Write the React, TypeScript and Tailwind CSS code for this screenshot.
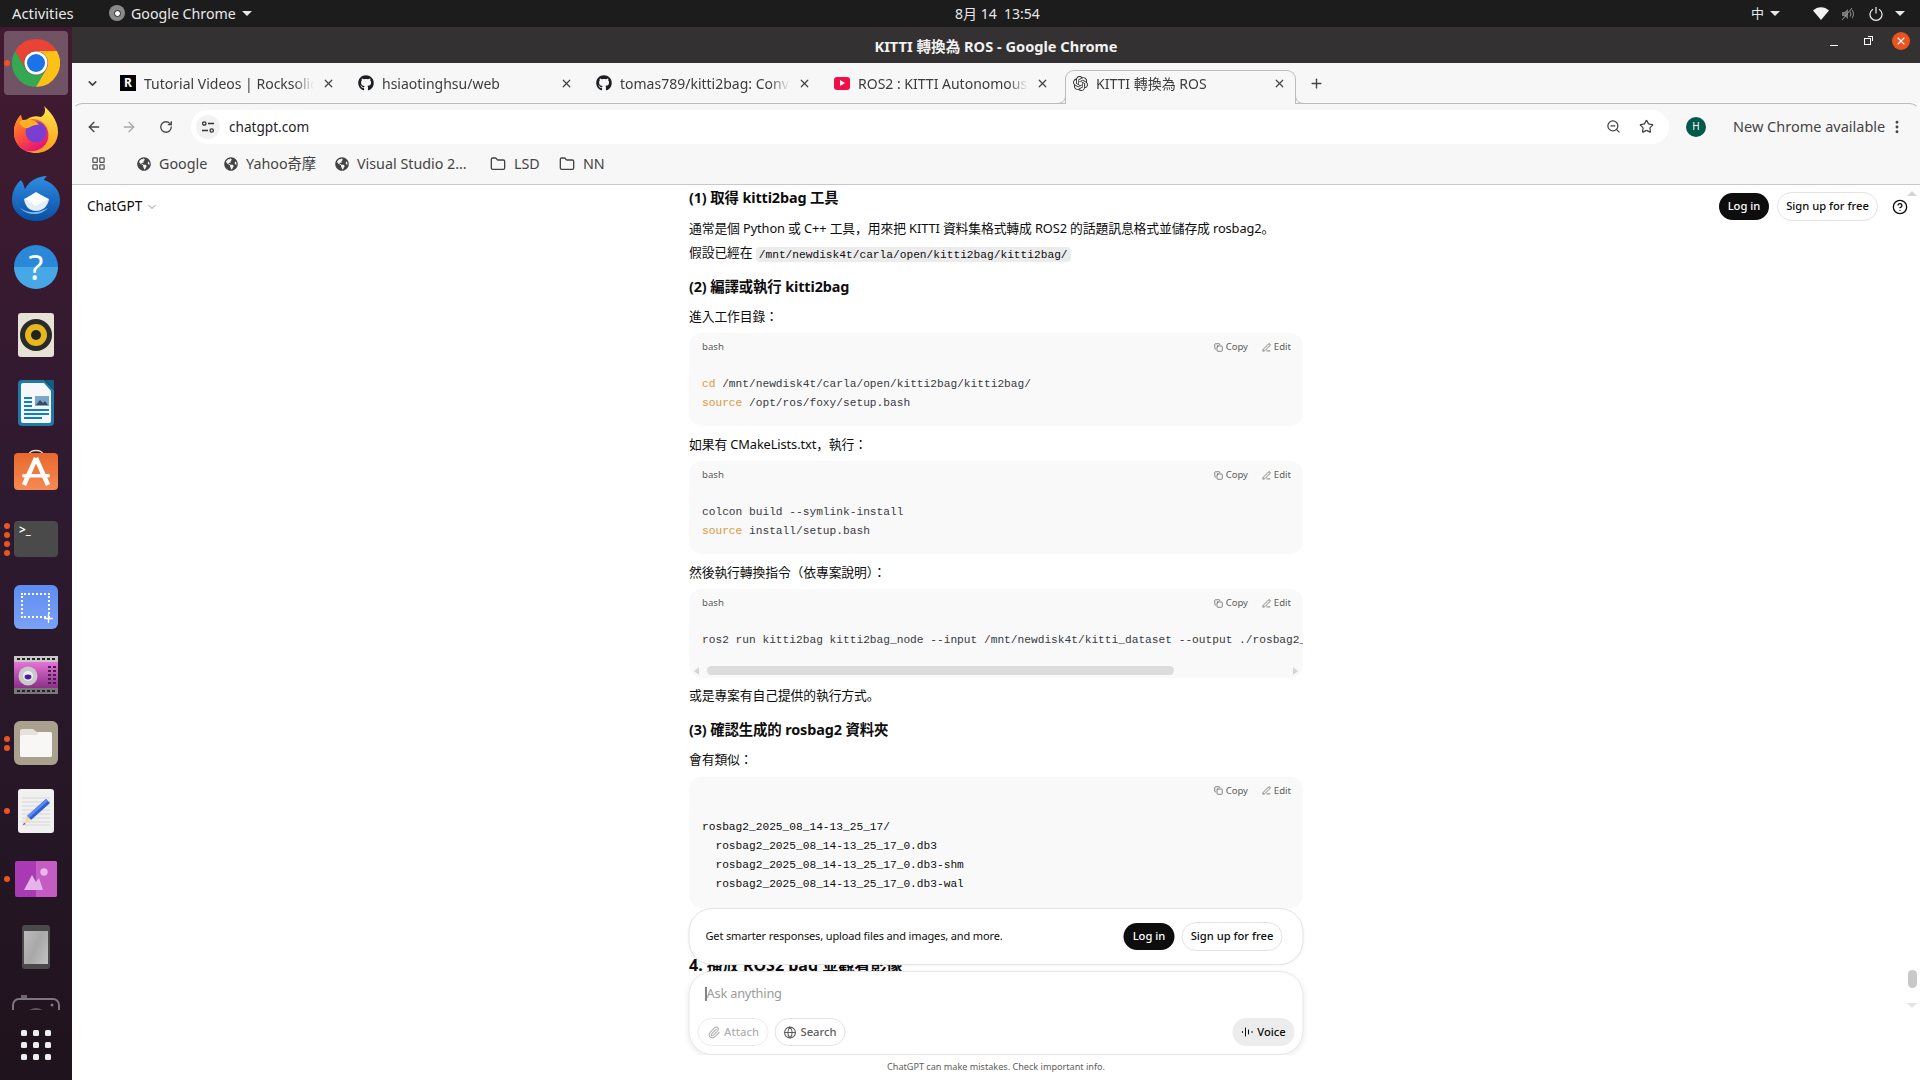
import { ArrowLeft, ArrowRight, ChevronDown, CircleHelp, Copy, EllipsisVertical, Folder, Globe, LayoutGrid, Paperclip, PenLine, Plus, RotateCw, Star, X, ZoomOut } from 'lucide-react'
import { FaGithub, FaGlobeAmericas } from 'react-icons/fa'
import { SiOpenai } from 'react-icons/si'
import type { ReactNode } from 'react'

const mono = "font-['Liberation_Mono','Noto_Sans_CJK_JP',monospace]"

function ChromeIcon({ size = 48 }: { size?: number }) {
  return (
    <svg width={size} height={size} viewBox="0 0 48 48">
      <path d="M24 0A24 24 0 0 1 44.8 12H24A12 12 0 0 0 13.6 30L3.2 12A24 24 0 0 1 24 0Z" fill="#ea4335" />
      <path d="M3.2 12A24 24 0 0 0 24 48L34.4 30A12 12 0 0 1 13.6 30Z" fill="#34a853" />
      <path d="M44.8 12H24A12 12 0 0 1 34.4 30L24 48A24 24 0 0 0 44.8 12Z" fill="#fbc116" />
      <circle cx="24" cy="24" r="11.5" fill="#fff" />
      <circle cx="24" cy="24" r="9" fill="#1a73e8" />
    </svg>
  )
}

function FirefoxIcon() {
  return (
    <svg className="-mt-[3px]" width="46" height="48" viewBox="0 0 46 48">
      <defs>
        <linearGradient id="ffBody" x1="0" y1="0" x2="0.6" y2="1">
          <stop offset="0" stopColor="#ff9a1f" />
          <stop offset="0.55" stopColor="#ff4f3a" />
          <stop offset="1" stopColor="#e5147a" />
        </linearGradient>
        <linearGradient id="ffTop" x1="0.5" y1="0" x2="0.5" y2="1">
          <stop offset="0" stopColor="#ffe84a" />
          <stop offset="1" stopColor="#ff9a1f" />
        </linearGradient>
      </defs>
      <path d="M31 0C36 5 45 13 45 26C45 38 35 47 23 47C10 47 1 38 1 26C1 19 4 13 8 9C8 13 10 15 12 16C15 11 21 9 28 11C32 9 33 4 31 0Z" fill="url(#ffTop)" />
      <path d="M1 26C1 19 4 13 8 9C8 13 10 15 12 16C16 12 24 12 29 16C37 22 38 34 30 41C23 47 10 47 5 39C2 35 1 31 1 26Z" fill="url(#ffBody)" />
      <circle cx="23" cy="26" r="10.5" fill="#7a3fd0" />
      <path d="M6 16C12 12 22 13 26 19C21 18 18 21 15 22C11 23 8 20 6 16Z" fill="#ffb11f" />
    </svg>
  )
}

function ThunderbirdIcon() {
  return (
    <svg width="48" height="48" viewBox="0 0 48 48">
      <defs>
        <linearGradient id="tbBody" x1="0" y1="0" x2="0" y2="1">
          <stop offset="0" stopColor="#2f8de4" />
          <stop offset="1" stopColor="#0a4fa3" />
        </linearGradient>
      </defs>
      <path d="M9 5C12 9 12 12 13 14C17 6 26 1 35 1C33 3 32 4 32 5C41 8 48 15 48 25C48 38 37 46 24 46C11 46 0 37 0 25C0 17 3 10 9 5Z" fill="url(#tbBody)" />
      <path d="M12 24L24 18L37 24C36 31 31 36 24 36C17 36 13 31 12 24Z" fill="#e4eefa" />
      <path d="M13 24L24 31L36 24L24 17Z" fill="#ffffff" />
      <path d="M4 26C7 37 22 41 36 33C28 42 10 42 4 26Z" fill="#7fc0f5" />
    </svg>
  )
}

function HelpIcon() {
  return (
    <div className="flex h-[44px] w-[44px] items-center justify-center rounded-full bg-[linear-gradient(#2a88d8_0%,#2a88d8_50%,#46a8e6_50%,#46a8e6_100%)] text-[34px] leading-none text-white">
      ?
    </div>
  )
}

function SpeakerIcon() {
  return (
    <div className="flex h-[44px] w-[36px] items-center justify-center rounded-[3px] bg-[#e6e2d6]">
      <div className="flex h-[32px] w-[32px] items-center justify-center rounded-full bg-[#2a2a2a]">
        <div className="flex h-[22px] w-[22px] items-center justify-center rounded-full bg-[#e6b81e]">
          <div className="h-[10px] w-[10px] rounded-full bg-[#222]" />
        </div>
      </div>
    </div>
  )
}

function WriterIcon() {
  return (
    <svg width="36" height="46" viewBox="0 0 36 46">
      <path d="M4 0H26L36 10V42A4 4 0 0 1 32 46H4A4 4 0 0 1 0 42V4A4 4 0 0 1 4 0Z" fill="#1f7aa8" />
      <path d="M5 3H26L33 11V41A2 2 0 0 1 31 43H5A2 2 0 0 1 3 41V5A2 2 0 0 1 5 3Z" fill="#f4f8fb" />
      <path d="M27 0L36 0V10Z" fill="#125c85" />
      <rect x="6" y="17" width="8" height="2" fill="#1080c0" />
      <rect x="6" y="21" width="8" height="2" fill="#1080c0" />
      <rect x="6" y="25" width="8" height="2" fill="#1080c0" />
      <rect x="17" y="16" width="14" height="10" fill="#7ba7c8" />
      <path d="M18 25L22 20L25 23L27 21L30 25Z" fill="#3a4a58" />
      <rect x="6" y="29" width="25" height="2" fill="#1080c0" />
      <rect x="6" y="33" width="25" height="2" fill="#1080c0" />
      <rect x="6" y="37" width="18" height="2" fill="#1080c0" />
    </svg>
  )
}

function SoftwareIcon() {
  return (
    <svg className="-mt-[4px]" width="44" height="44" viewBox="0 0 44 44">
      <defs>
        <linearGradient id="swBag" x1="0" y1="0" x2="0" y2="1">
          <stop offset="0" stopColor="#e9682d" />
          <stop offset="1" stopColor="#f58a52" />
        </linearGradient>
      </defs>
      <path d="M15 8C15 2 29 2 29 8" fill="none" stroke="#e8d9c8" strokeWidth="1.6" />
      <rect x="0" y="6" width="44" height="37" rx="4" fill="url(#swBag)" />
      <path d="M22 11L10 38M22 11L34 38" stroke="#fff" strokeWidth="4.5" fill="none" />
      <rect x="8" y="27" width="28" height="3.5" rx="1.7" fill="#fff" />
    </svg>
  )
}

function ScreenshotIcon() {
  return (
    <div className="relative h-[44px] w-[44px] rounded-[6px] bg-[linear-gradient(#5e8df0,#7aa2f7)]">
      <div className="absolute left-[7px] top-[8px] h-[25px] w-[29px] border-2 border-dotted border-white" />
      <Plus className="absolute bottom-[4px] right-[3px] text-white" size={13} strokeWidth={2.5} />
    </div>
  )
}

function KazamIcon() {
  return (
    <svg width="44" height="38" viewBox="0 0 44 38">
      <defs>
        <linearGradient id="kzFilm" x1="0" y1="0" x2="0" y2="1">
          <stop offset="0" stopColor="#e873d8" />
          <stop offset="1" stopColor="#8a2f88" />
        </linearGradient>
      </defs>
      <rect width="44" height="38" rx="1" fill="#a0a0a0" />
      <rect y="0" width="44" height="6" fill="#c8c8c8" />
      <rect y="32" width="44" height="6" fill="#777" />
      <rect y="6" width="44" height="26" fill="url(#kzFilm)" />
      {[3, 8, 13, 18, 23, 28, 33, 38].map((x) => (
        <g key={x}>
          <rect x={x} y="2" width="3" height="2" fill="#222" />
          <rect x={x} y="34" width="3" height="2" fill="#222" />
        </g>
      ))}
      <circle cx="14" cy="20" r="9.5" fill="#c9c9c9" />
      <circle cx="14" cy="20" r="5" fill="#eee" />
      <ellipse cx="14" cy="21" rx="3.4" ry="2.4" fill="#4b1e9e" />
      {[10, 14, 18, 22, 26].map((y) => (
        <g key={y}>
          <rect x="34" y={y} width="3" height="2" fill="#45204a" />
          <rect x="39" y={y} width="3" height="2" fill="#45204a" />
        </g>
      ))}
    </svg>
  )
}

function FilesIcon() {
  return (
    <div className="flex h-[44px] w-[44px] items-center justify-center rounded-[6px] bg-[#a9a18d]">
      <svg width="32" height="28" viewBox="0 0 32 28">
        <path d="M2 0H13L17 3H30A2 2 0 0 1 32 5V26A2 2 0 0 1 30 28H2A2 2 0 0 1 0 26V2A2 2 0 0 1 2 0Z" fill="#e6e2da" />
        <path d="M0 8A2 2 0 0 1 2 6H17L19 3H30A2 2 0 0 1 32 5V26A2 2 0 0 1 30 28H2A2 2 0 0 1 0 26Z" fill="#f8f7f5" />
      </svg>
    </div>
  )
}

function EditorIcon() {
  return (
    <div className="relative h-[44px] w-[36px] rounded-[3px] bg-[#f0f0f0]">
      <svg width="36" height="44" viewBox="0 0 36 44">
        {[9, 13, 17, 21, 25, 29, 33, 36].map((y) => (
          <line key={y} x1="4" x2="32" y1={y} y2={y} stroke="#cfcfcf" strokeWidth="0.8" />
        ))}
        <path d="M28 10L32 14L13 31L9 27Z" fill="#2a5fd6" />
        <path d="M28 10L30 12L11 29L9 27Z" fill="#5c8cf0" />
        <path d="M9 27L13 31L5 36Z" fill="#f3d6b0" />
        <path d="M6 34L5 36L7.5 35Z" fill="#333" />
      </svg>
    </div>
  )
}

function PicturesIcon() {
  return (
    <svg width="42" height="36" viewBox="0 0 42 36">
      <rect width="42" height="36" rx="2" fill="#a83bb3" />
      <path d="M21 0H40A2 2 0 0 1 42 2V34A2 2 0 0 1 40 36H21Z" fill="#c45cc4" />
      <circle cx="29" cy="11" r="3.7" fill="#e8b8e8" />
      <path d="M9 29L17 14L21 21L24 17L28 29Z" fill="#e4b4e8" />
    </svg>
  )
}

function TabletIcon() {
  return (
    <div className="flex h-[44px] w-[28px] flex-col rounded-[3px] bg-[#4a4a4a] px-[2px] pb-[5px] pt-[6px]">
      <div className="h-full w-full bg-[linear-gradient(115deg,#bbb,#a8a8a8_50%,#c4c4c4)]" />
    </div>
  )
}

function CameraIcon() {
  return (
    <svg width="48" height="40" viewBox="0 0 48 40">
      <rect x="9" y="0" width="6" height="5" fill="#6f6770" />
      <rect x="1" y="4" width="46" height="36" rx="6" fill="none" stroke="#7d7580" strokeWidth="2" />
      <circle cx="24" cy="24" r="10" fill="none" stroke="#5b5360" strokeWidth="2" />
      <circle cx="40" cy="10" r="1.5" fill="#7d7580" />
    </svg>
  )
}

const dockItems: { icon: ReactNode; dots: number; active?: boolean }[] = [
  { icon: <ChromeIcon />, dots: 1, active: true },
  { icon: <FirefoxIcon />, dots: 0 },
  { icon: <ThunderbirdIcon />, dots: 0 },
  { icon: <HelpIcon />, dots: 0 },
  { icon: <SpeakerIcon />, dots: 0 },
  { icon: <WriterIcon />, dots: 0 },
  { icon: <SoftwareIcon />, dots: 0 },
  { icon: <div className="h-[36px] w-[44px] rounded-[4px] bg-[#4a4a4a] pl-[5px] text-[12px] font-bold leading-[18px] text-white">&gt;_</div>, dots: 4 },
  { icon: <ScreenshotIcon />, dots: 0 },
  { icon: <KazamIcon />, dots: 0 },
  { icon: <FilesIcon />, dots: 2 },
  { icon: <EditorIcon />, dots: 1 },
  { icon: <PicturesIcon />, dots: 1 },
  { icon: <TabletIcon />, dots: 0 },
  { icon: <CameraIcon />, dots: 0 },
]

function Dock() {
  return (
    <aside className="flex w-[72px] shrink-0 flex-col bg-[linear-gradient(#421a30,#2e1a30_45%,#1f131d)]">
      <div className="flex h-[983px] flex-col overflow-hidden pt-[2px]">
        {dockItems.map((item, i) => (
          <div key={i} className="relative flex h-[68px] shrink-0 items-center justify-center">
            {item.active && <div className="absolute inset-x-[4px] inset-y-[2px] rounded-[4px] bg-white/25" />}
            <div className="absolute left-[4px] flex flex-col gap-[3px]">
              {Array.from({ length: item.dots }).map((_, d) => (
                <div key={d} className="h-[6px] w-[6px] rounded-full bg-[#e95420]" />
              ))}
            </div>
            <div className="relative">{item.icon}</div>
          </div>
        ))}
      </div>
      <div className="flex flex-1 items-center justify-center">
        <div className="grid grid-cols-3 gap-x-[6px] gap-y-[6px]">
          {Array.from({ length: 9 }).map((_, i) => (
            <div key={i} className="h-[6px] w-[6px] rounded-[1.5px] bg-[#eeeeee]" />
          ))}
        </div>
      </div>
    </aside>
  )
}

function Caret() {
  return <div className="h-0 w-0 border-x-[5px] border-t-[5px] border-x-transparent border-t-[#e8e8e8]" />
}

function TopBar() {
  return (
    <header className="relative flex h-[27px] shrink-0 items-center bg-[#1c1c1c] text-[14px] text-[#e8e8e8]">
      <span className="ml-[12px] w-[97px] text-[14.8px]">Activities</span>
      <div className="flex items-center gap-[6px]">
        <div className="flex h-[16px] w-[16px] items-center justify-center rounded-full bg-[#8a8a8a]">
          <div className="h-[7px] w-[7px] rounded-full border border-[#222] bg-white" />
        </div>
        <span className="text-[14.2px]">Google Chrome</span>
        <Caret />
      </div>
      <div className="absolute left-[955px] top-[3px]">8月 14&nbsp;&nbsp;13:54</div>
      <div className="ml-auto flex items-center">
        <span className="text-[13px]">中</span>
        <div className="ml-[6px] mr-[33px]"><Caret /></div>
        <svg width="16" height="13" viewBox="0 0 16 13"><path d="M0 3.5C4.5-1 11.5-1 16 3.5L8 13Z" fill="#f2f2f2" /></svg>
        <svg className="ml-[12px]" width="15" height="14" viewBox="0 0 15 14">
          <path d="M1 5H3.5L7 2V12L3.5 9H1Z" fill="#777" />
          <path d="M9 4.5C10 6 10 8 9 9.5M11 3C13 5 13 9 11 11" fill="none" stroke="#777" strokeWidth="1.2" />
          <path d="M1 13L11 1" stroke="#999" strokeWidth="1" />
        </svg>
        <svg className="ml-[13px]" width="14" height="14" viewBox="0 0 14 14" fill="none" stroke="#efefef" strokeWidth="1.2">
          <path d="M4 2.2A6 6 0 1 0 10 2.2M7 0V6.5" />
        </svg>
        <div className="ml-[12px] mr-[15px]"><Caret /></div>
      </div>
    </header>
  )
}

function TitleBar() {
  return (
    <div className="relative flex h-[36px] shrink-0 items-center justify-center bg-[#333131] pt-[3px] text-[14.6px] font-bold text-[#f2f2f2]">
      <span>KITTI 轉換為 ROS - Google Chrome</span>
      <div className="absolute right-[10px] top-[5px] flex items-center">
        <div className="mr-[26px] mt-[8px] h-[1px] w-[8px] bg-white" />
        <div className="relative mr-[21px] h-[7px] w-[7px] border border-white">
          <div className="absolute -right-[3px] -top-[3px] h-[5px] w-[5px] border-r border-t border-white" />
        </div>
        <div className="flex h-[18px] w-[18px] items-center justify-center rounded-full bg-[#e95420]">
          <X size={12} strokeWidth={2.2} className="text-white" />
        </div>
      </div>
    </div>
  )
}

function RockIcon() {
  return (
    <div className="flex h-[16px] w-[16px] items-center justify-center bg-black text-[12px] font-bold leading-none text-white">R</div>
  )
}

const tabs: { icon: ReactNode; title: string; active?: boolean }[] = [
  { icon: <RockIcon />, title: 'Tutorial Videos | Rocksolid' },
  { icon: <FaGithub size={16} className="text-[#1b1f23]" />, title: 'hsiaotinghsu/web' },
  { icon: <FaGithub size={16} className="text-[#1b1f23]" />, title: 'tomas789/kitti2bag: Convert' },
  {
    icon: (
      <div className="flex h-[13px] w-[16px] items-center justify-center rounded-[3px] bg-[#f00f47]">
        <div className="h-0 w-0 border-y-[3px] border-l-[5px] border-y-transparent border-l-white" />
      </div>
    ),
    title: 'ROS2 : KITTI Autonomous Driving',
  },
  { icon: <SiOpenai size={15} className="text-[#333]" />, title: 'KITTI 轉換為 ROS', active: true },
]

function TabStrip() {
  return (
    <div className="flex h-[40px] shrink-0 items-end bg-[#f7f7f7]">
      <div className="flex h-[33px] w-[41px] items-center pb-[7px] pl-[14px]">
        <ChevronDown size={13} strokeWidth={3} className="text-[#444]" />
      </div>
      {tabs.map((tab) => (
        <div
          key={tab.title}
          className={
            tab.active
              ? 'relative z-10 -mb-px flex h-[34px] w-[231px] items-center rounded-t-[9px] border border-b-0 border-[#bdbdbd] bg-[#f7f7f7] pb-[9px] pl-[6px] pr-[9px]'
              : 'flex h-[33px] w-[238px] items-center pb-[7px] pl-[7px] pr-[16px]'
          }
        >
          <div className="flex w-[16px] shrink-0 items-center justify-center">{tab.icon}</div>
          <span className="ml-[8px] min-w-0 flex-1 overflow-hidden whitespace-nowrap text-[14px] text-[#3c3c3c] [mask-image:linear-gradient(to_right,black_88%,transparent)]">
            {tab.title}
          </span>
          <X size={13} strokeWidth={2.2} className="ml-[8px] shrink-0 text-[#444]" />
          {tab.active && (
            <>
              <svg className="absolute -left-[9px] bottom-0" width="9" height="9" viewBox="0 0 9 9" fill="none">
                <path d="M0 8.5C5 8.5 8.5 6 8.5 0" stroke="#bdbdbd" />
              </svg>
              <svg className="absolute -right-[9px] bottom-0" width="9" height="9" viewBox="0 0 9 9" fill="none">
                <path d="M9 8.5C4 8.5 0.5 6 0.5 0" stroke="#bdbdbd" />
              </svg>
            </>
          )}
        </div>
      ))}
      <div className="flex h-[33px] items-center pb-[7px] pl-[13px]">
        <Plus size={15} strokeWidth={2.2} className="text-[#444]" />
      </div>
    </div>
  )
}

function Toolbar() {
  return (
    <div className="flex h-[43px] shrink-0 items-center rounded-t-[10px] border-x border-t border-x-transparent border-t-[#bdbdbd] bg-[#f7f7f7] pt-[3px]">
      <ArrowLeft size={16} strokeWidth={2} className="ml-[13px] text-[#444]" />
      <ArrowRight size={16} strokeWidth={2} className="ml-[19px] text-[#a8a8a8]" />
      <RotateCw size={14} strokeWidth={2.2} className="ml-[22px] text-[#444]" />
      <div className="ml-[18px] flex h-[34px] w-[1478px] items-center rounded-full bg-white pl-[5px] pr-[15px]">
        <div className="flex h-[24px] w-[24px] items-center justify-center rounded-full bg-[#f2f2f2]">
          <svg width="14" height="14" viewBox="0 0 14 14" fill="none" stroke="#333" strokeWidth="1.3">
            <circle cx="3.3" cy="3.5" r="1.7" />
            <path d="M7 3.5H13M1 10.5H7" />
            <circle cx="10.7" cy="10.5" r="1.7" />
          </svg>
        </div>
        <span className="ml-[9px] mt-[1px] text-[13.6px] text-[#1f1f1f]">chatgpt.com</span>
        <ZoomOut size={15} strokeWidth={2} className="ml-auto text-[#444]" />
        <Star size={15} strokeWidth={2} className="ml-[18px] text-[#444]" />
      </div>
      <div className="ml-[17px] flex h-[20px] w-[20px] items-center justify-center rounded-full bg-[#005a4c] text-[10px] text-white">H</div>
      <span className="ml-[27px] whitespace-nowrap text-[14.5px] text-[#444]">New Chrome available</span>
      <EllipsisVertical size={16} strokeWidth={2.4} className="ml-auto mr-[14px] text-[#444]" />
    </div>
  )
}

const bookmarks = [
  { label: 'Google', folder: false, width: 'w-[87px]' },
  { label: 'Yahoo奇摩', folder: false, width: 'w-[111px]' },
  { label: 'Visual Studio 2…', folder: false, width: 'w-[155px]' },
  { label: 'LSD', folder: true, width: 'w-[69px]' },
  { label: 'NN', folder: true, width: 'w-[60px]' },
]

function BookmarksBar() {
  return (
    <div className="flex h-[39px] shrink-0 items-center border-b border-[#c8c8c8] bg-[#f7f7f7] pb-[3px] pl-[19px]">
      <LayoutGrid size={15} strokeWidth={2} className="mr-[31px] text-[#555]" />
      {bookmarks.map((b) => (
        <div key={b.label} className={`flex items-center gap-[8px] ${b.width}`}>
          {b.folder ? <Folder size={16} strokeWidth={2} className="text-[#444]" /> : <FaGlobeAmericas size={14} className="text-[#444]" />}
          <span className="whitespace-nowrap text-[14.3px] text-[#444]">{b.label}</span>
        </div>
      ))}
    </div>
  )
}

function CodeHeader({ lang }: { lang?: string }) {
  return (
    <div className="flex h-[28px] items-center pl-[13px] pr-[12px] pt-[1px] text-[9.6px] text-[#5d5d5d]">
      <span>{lang}</span>
      <div className="ml-auto flex items-center gap-[3px]">
        <Copy size={9} />
        <span className="w-[33px] tracking-[-0.1px]">Copy</span>
        <PenLine size={9} />
        <span>Edit</span>
      </div>
    </div>
  )
}

function CodeBlock({ lang, children, scroll, mt = 'mt-[5px]' }: { lang?: string; children: ReactNode; scroll?: boolean; mt?: string }) {
  return (
    <div className={`${mt} overflow-hidden rounded-[13px] bg-[#f9f9f9]`}>
      <CodeHeader lang={lang} />
      <pre className={`overflow-hidden pl-[13px] pt-[13.5px] text-[11.2px] leading-[19px] ${mono} ${scroll ? 'pb-0' : 'pb-[13.5px]'}`}>{children}</pre>
      {scroll && (
        <div className="mt-[16px] flex h-[12px] items-start">
          <div className="ml-[5px] mt-[1px] h-0 w-0 border-y-[4px] border-r-[5px] border-y-transparent border-r-[#d4d4d4]" />
          <div className="ml-[8px] h-[9px] w-[467px] rounded-full bg-[#dcdcdc]" />
          <div className="ml-auto mr-[5px] mt-[1px] h-0 w-0 border-y-[4px] border-l-[5px] border-y-transparent border-l-[#d4d4d4]" />
        </div>
      )}
    </div>
  )
}

const K = ({ children }: { children: ReactNode }) => <span className="text-[#e0963c]">{children}</span>

function Para({ children, mt = 'mt-[6px]' }: { children: ReactNode; mt?: string }) {
  return <p className={`${mt} h-[24px] text-[12.8px] leading-[24px] tracking-[-0.1px] text-[#0d0d0d]`}>{children}</p>
}

function H3({ children, mt }: { children: ReactNode; mt: string }) {
  return <h3 className={`${mt} text-[14.4px] font-bold leading-[20px] tracking-[-0.12px] text-[#0d0d0d]`}>{children}</h3>
}

function Article() {
  return (
    <article className="mx-auto w-[614px] pt-[3px]">
      <H3 mt="mt-0">(1) 取得 kitti2bag 工具</H3>
      <Para mt="mt-[8px]">通常是個 Python 或 C++ 工具，用來把 KITTI 資料集格式轉成 ROS2 的話題訊息格式並儲存成 rosbag2。</Para>
      <Para mt="mt-0">
        假設已經在{' '}
        <code className={`rounded-[4px] bg-[#ececec] px-[3px] py-[1.5px] text-[11.2px] tracking-normal ${mono}`}>/mnt/newdisk4t/carla/open/kitti2bag/kitti2bag/</code>
      </Para>
      <H3 mt="mt-[13px]">(2) 編譯或執行 kitti2bag</H3>
      <Para mt="mt-[7px]">進入工作目錄：</Para>
      <CodeBlock lang="bash">
        <span className="text-[#383a42]">
          <K>cd</K> /mnt/newdisk4t/carla/open/kitti2bag/kitti2bag/{'\n'}
          <K>source</K> /opt/ros/foxy/setup.bash
        </span>
      </CodeBlock>
      <Para>如果有 CMakeLists.txt，執行：</Para>
      <CodeBlock lang="bash">
        <span className="text-[#383a42]">
          colcon build --symlink-install{'\n'}
          <K>source</K> install/setup.bash
        </span>
      </CodeBlock>
      <Para>然後執行轉換指令（依專案說明）：</Para>
      <CodeBlock lang="bash" scroll>
        <span className="text-[#383a42]">ros2 run kitti2bag kitti2bag_node --input /mnt/newdisk4t/kitti_dataset --output ./rosbag2_kitti</span>
      </CodeBlock>
      <Para mt="mt-[5px]">或是專案有自己提供的執行方式。</Para>
      <H3 mt="mt-[13px]">(3) 確認生成的 rosbag2 資料夾</H3>
      <Para mt="mt-[7px]">會有類似：</Para>
      <CodeBlock mt="mt-[6px]">
        <span className="text-[#0d0d0d]">
          {'rosbag2_2025_08_14-13_25_17/\n  rosbag2_2025_08_14-13_25_17_0.db3\n  rosbag2_2025_08_14-13_25_17_0.db3-shm\n  rosbag2_2025_08_14-13_25_17_0.db3-wal'}
        </span>
      </CodeBlock>
      <h2 className="mt-[46px] text-[16px] font-bold leading-[22px] text-[#0d0d0d]">4. 播放 ROS2 bag 並觀看影像</h2>
    </article>
  )
}

function VoiceBars() {
  return (
    <svg width="12" height="12" viewBox="0 0 12 12" stroke="#0d0d0d" strokeWidth="1" strokeLinecap="round">
      <path d="M1 5.5V6.5M4 2V10M7 4V8M10.5 5.5V6.5" />
    </svg>
  )
}

function Composer() {
  return (
    <div className="absolute bottom-0 left-1/2 w-[615px] -translate-x-1/2">
      <div className="flex h-[57px] items-center rounded-[24px] border border-[#e3e3e3] bg-white pl-[16px] pr-[20px] shadow-[0_1px_3px_rgba(0,0,0,0.04)]">
        <span className="text-[11px] tracking-[-0.14px] text-[#0d0d0d]">Get smarter responses, upload files and images, and more.</span>
        <button className="ml-auto h-[27px] w-[51px] rounded-full bg-[#0d0d0d] text-[11.2px] font-medium text-white">Log in</button>
        <button className="ml-[7px] h-[29px] w-[101px] rounded-full border border-[#e3e3e3] bg-white text-[11.2px] font-medium text-[#0d0d0d]">Sign up for free</button>
      </div>
      <div className="mt-[6px] h-[84px] rounded-[24px] border border-[#e8e8e8] bg-white shadow-[0_2px_6px_rgba(0,0,0,0.08)]">
        <div className="flex h-[46px] items-center pb-[3px] pl-[16px]">
          <div className="h-[14px] w-px bg-[#0d0d0d]" />
          <span className="text-[12.8px] tracking-[-0.2px] text-[#9b9b9b]">Ask anything</span>
        </div>
        <div className="flex items-center px-[8px]">
          <div className="flex h-[28px] w-[71px] items-center justify-center gap-[4px] rounded-full border border-[#ececec] text-[11.2px] font-medium text-[#b0b0b0]">
            <Paperclip size={13} />
            Attach
          </div>
          <div className="ml-[6px] flex h-[28px] w-[71px] items-center justify-center gap-[4px] rounded-full border border-[#e3e3e3] text-[11.2px] font-medium text-[#5d5d5d]">
            <Globe size={13} />
            Search
          </div>
          <div className="ml-auto flex h-[28px] w-[62px] items-center justify-center gap-[4px] rounded-full bg-[#ececec] text-[11.2px] font-medium text-[#0d0d0d]">
            <VoiceBars />
            Voice
          </div>
        </div>
      </div>
      <div className="flex h-[25px] items-center justify-center bg-white pb-[1px] text-[9.1px] text-[#5d5d5d]">ChatGPT can make mistakes. Check important info.</div>
    </div>
  )
}

function ChatPage() {
  return (
    <main className="relative flex-1 overflow-hidden bg-white">
      <Article />
      <div className="absolute inset-x-0 top-[7px] flex items-center pl-[15px] pr-[12px]">
        <span className="text-[13.6px] text-[#0d0d0d]">ChatGPT</span>
        <ChevronDown size={12} className="ml-[4px] text-[#8f8f8f]" />
        <button className="ml-auto h-[27px] w-[50px] rounded-full bg-[#0d0d0d] text-[11.2px] font-medium text-white">Log in</button>
        <button className="ml-[8px] h-[29px] w-[101px] rounded-full border border-[#e3e3e3] bg-white text-[11.2px] font-medium text-[#0d0d0d]">Sign up for free</button>
        <CircleHelp size={16} className="ml-[14px] text-[#0d0d0d]" />
      </div>
      {/* page scrollbar */}
      <div className="absolute right-[3px] top-[6px] h-0 w-0 border-x-[5px] border-b-[5px] border-x-transparent border-b-[#d4d4d4]" />
      <div className="absolute right-[3px] top-[785px] h-[18px] w-[9px] rounded-full bg-[#c8c8c8]" />
      <div className="absolute right-[3px] top-[818px] h-0 w-0 border-x-[5px] border-t-[5px] border-x-transparent border-t-[#e2e2e2]" />
      <Composer />
    </main>
  )
}

export default function App() {
  return (
    <div className="flex h-screen w-screen flex-col overflow-hidden bg-white font-['Noto_Sans','Noto_Sans_CJK_JP',sans-serif]">
      <TopBar />
      <div className="flex min-h-0 flex-1">
        <Dock />
        <div className="flex min-w-0 flex-1 flex-col">
          <TitleBar />
          <TabStrip />
          <Toolbar />
          <BookmarksBar />
          <ChatPage />
        </div>
      </div>
    </div>
  )
}
